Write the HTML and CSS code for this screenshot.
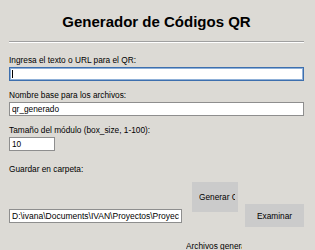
FILE: index.html
```html
<!DOCTYPE html>
<html lang="es">
<head>
    <meta charset="UTF-8">
    <meta name="viewport" content="width=device-width, initial-scale=1.0">
    <title>Generador de Códigos QR</title>
    <link rel="stylesheet" href="styles.css">
</head>
<body>
    <div class="app">
        <h1 class="title">Generador de Códigos QR</h1>
        <div class="sep"></div>

        <div class="fields">
            <div class="field">
                <label class="field-label" for="texto">Ingresa el texto o URL para el QR:</label>
                <div class="focus-wrap">
                    <input class="entry entry-focus" id="texto" type="text" value="">
                </div>
            </div>
            <div class="field">
                <label class="field-label" for="nombre">Nombre base para los archivos:</label>
                <input class="entry" id="nombre" type="text" value="qr_generado">
            </div>
            <div class="field">
                <label class="field-label" for="tam">Tamaño del módulo (box_size, 1-100):</label>
                <input class="entry entry-short" id="tam" type="text" value="10">
            </div>
        </div>

        <div class="field-label save-label">Guardar en carpeta:</div>
        <div class="save">
            <button class="btn btn-generar"><span class="btn-text">Generar Códigos QR</span></button>
            <input class="entry entry-path" type="text" value="D:\ivana\Documents\IVAN\Proyectos\Proyectos Python\QR">
            <button class="btn btn-examinar">Examinar</button>
            <div class="archivos">Archivos generados:</div>
        </div>
    </div>
</body>
</html>
```

FILE: styles.css
```css
body {
    margin: 0;
    background: #dcdad5;
    font-family: "Liberation Sans", Arial, sans-serif;
    font-size: 8.3px;
    color: #000;
    overflow: hidden;
}
.app {
    width: 295px;
    padding: 13px 0 0 9px;
}
.title {
    margin: 0;
    font-size: 15px;
    line-height: 17px;
    font-weight: bold;
    text-align: center;
}
.sep {
    margin-top: 11px;
    height: 0;
    border-top: 1px solid #a0a0a0;
    border-bottom: 1px solid #fff;
}
.fields {
    display: flex;
    flex-direction: column;
    gap: 9px;
    margin-top: 12px;
}
.field {
    display: flex;
    flex-direction: column;
    align-items: flex-start;
    gap: 2px;
}
.field-label {
    line-height: 10px;
}
.entry {
    box-sizing: border-box;
    width: 295px;
    height: 14px;
    margin: 0;
    padding: 0 2px;
    border: 1px solid #8e8e8e;
    background: #fff;
    font: inherit;
    color: #000;
    outline: none;
}
.focus-wrap {
    position: relative;
}
.focus-wrap::after {
    content: "";
    position: absolute;
    left: 3px;
    top: 3px;
    width: 1px;
    height: 8px;
    background: #000;
}
.entry-focus {
    border-color: #3d6fae;
    box-shadow: inset 0 0 0 1px #8fb0d8;
}
.entry-short {
    width: 46px;
}
.save-label {
    margin-top: 13px;
}
.save {
    display: grid;
    grid-template-columns: 177px 56px 62px;
    grid-template-rows: 30px 23px auto;
}
.btn {
    border: none;
    margin: 0;
    background: #cbcbcb;
    font: inherit;
    color: #000;
    white-space: nowrap;
    overflow: hidden;
}
.btn-generar {
    grid-column: 2;
    grid-row: 1 / 3;
    align-self: start;
    width: 46px;
    height: 30px;
    margin: 8px 0 0 6px;
    padding: 0 0 0 7px;
    text-align: left;
}
.btn-text {
    display: block;
    width: 36px;
    overflow: hidden;
}
.entry-path {
    grid-column: 1;
    grid-row: 2;
    align-self: center;
    width: 173px;
    font-size: 8.5px;
}
.btn-examinar {
    grid-column: 3;
    grid-row: 2;
    width: 59px;
    height: 23px;
    margin-left: 3px;
    padding: 0;
}
.archivos {
    grid-column: 2;
    grid-row: 3;
    width: 56px;
    margin-top: 14px;
    line-height: 10px;
    white-space: nowrap;
    overflow: hidden;
}
```
